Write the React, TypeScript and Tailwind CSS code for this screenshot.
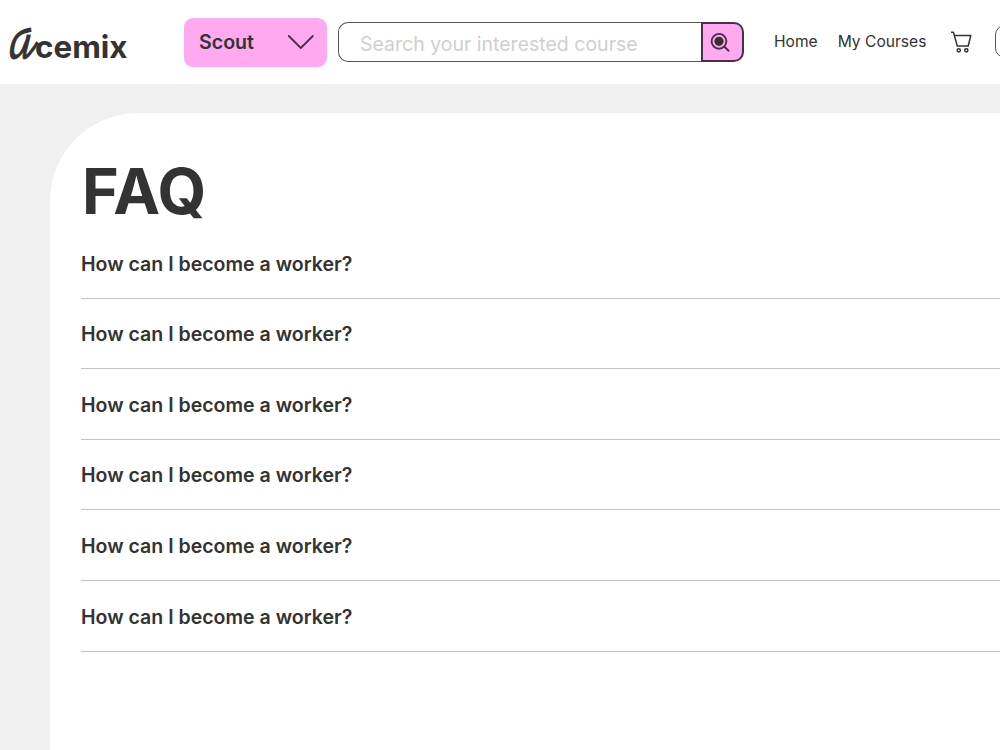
const QUESTIONS = Array.from({ length: 6 }, (_, id) => ({
  id,
  title: "How can I become a worker?",
}));

export default function App() {
  return (
    <div className="h-[750px] w-[1000px] overflow-hidden bg-[#f0f0f0] font-['Inter',sans-serif] text-[#333333]">
      <Header />
      <main className="ml-[50px] mt-[29px] h-[700px] rounded-tl-[88px] bg-white pl-[31px] pt-[46px]">
        <h1 className="h-16 pl-px text-[62.8px] font-bold leading-[64px]">FAQ</h1>
        <div className="mt-[5px]">
          {QUESTIONS.map((q) => (
            <FaqRow key={q.id} title={q.title} />
          ))}
        </div>
      </main>
    </div>
  );
}

function Header() {
  return (
    <header className="flex h-[84px] items-start bg-white">
      <Logo />

      {/* Role switch */}
      <button className="mt-[17.5px] flex h-[49px] w-[143px] shrink-0 items-center justify-between rounded-[9px] bg-[#ffa9f1] pl-[15px] pr-[13px]">
        <span className="pb-px text-[19.6px] font-semibold leading-6">Scout</span>
        <ChevronIcon />
      </button>

      {/* Search */}
      <div className="ml-[11px] mt-[22px] flex h-10 w-[406px] shrink-0">
        <div className="flex flex-1 items-center rounded-l-[10px] border border-r-0 border-[#555555] pl-[21px] pt-[3px]">
          <span className="whitespace-nowrap text-[19.5px] leading-6 text-[#cfcfcf]">
            Search your interested course
          </span>
        </div>
        <button className="flex w-[43px] items-center rounded-r-[10px] border-2 border-[#4a2f48] bg-[#ffa9f1] pl-[7px]">
          <SearchIcon />
        </button>
      </div>

      <nav className="ml-[30px] mt-[32px] flex gap-5 whitespace-nowrap text-[15.6px] leading-5">
        <a>Home</a>
        <a>My Courses</a>
      </nav>
      <div className="ml-auto flex w-[50px] shrink-0 items-start">
        <CartIcon />
        <div className="ml-[23px] mt-[25px] h-[33px] w-[90px] shrink-0 rounded-[10px] border border-[#555555]" />
      </div>
    </header>
  );
}

function Logo() {
  return (
    <div className="flex h-[84px] w-[184px] shrink-0 items-start pl-[8px]">
      <span className="mt-[17px] w-[27px] origin-left scale-x-[0.8] scale-y-[1.17] -skew-x-6 font-['DejaVu_Math_TeX_Gyre','DejaVu_Serif',serif] text-[48px] leading-[48px] [-webkit-text-stroke:1.1px_#333333]">
        𝒶
      </span>
      <span className="mt-[29px] text-[31.4px] font-bold leading-9">cemix</span>
    </div>
  );
}

function FaqRow({ title }: { title: string }) {
  return (
    <div className="flex h-[70.6px] items-end border-b border-[#c4c4c4] pb-[22px] text-[19.55px] font-semibold leading-6">
      {title}
    </div>
  );
}

function ChevronIcon() {
  return (
    <svg width="26" height="15" viewBox="0 0 26 15" fill="none" stroke="#4a2f48" strokeWidth="1.8">
      <path d="M0.8 1 L12.8 13 L24.8 1" strokeLinecap="round" strokeLinejoin="round" />
    </svg>
  );
}

function SearchIcon() {
  return (
    <svg width="21" height="21" viewBox="0 0 21 21" fill="none" stroke="#4a2f48" strokeWidth="1.9">
      <circle cx="9" cy="9.3" r="7.4" />
      <path d="M14.4 14.7 L18.6 18.8" strokeLinecap="round" />
      <circle cx="9" cy="9.3" r="4.6" fill="#333333" stroke="none" />
    </svg>
  );
}

function CartIcon() {
  return (
    <svg className="mt-[31px] shrink-0" width="22" height="22" viewBox="0 0 22 22" fill="none" stroke="#333333" strokeWidth="1.5">
      <path d="M1 1.2 H3.4 L7.3 15 H18.2 L20.8 4.6 H4.4" strokeLinejoin="round" />
      <circle cx="8.8" cy="19.3" r="1.6" />
      <circle cx="16.3" cy="19.3" r="1.6" />
    </svg>
  );
}
